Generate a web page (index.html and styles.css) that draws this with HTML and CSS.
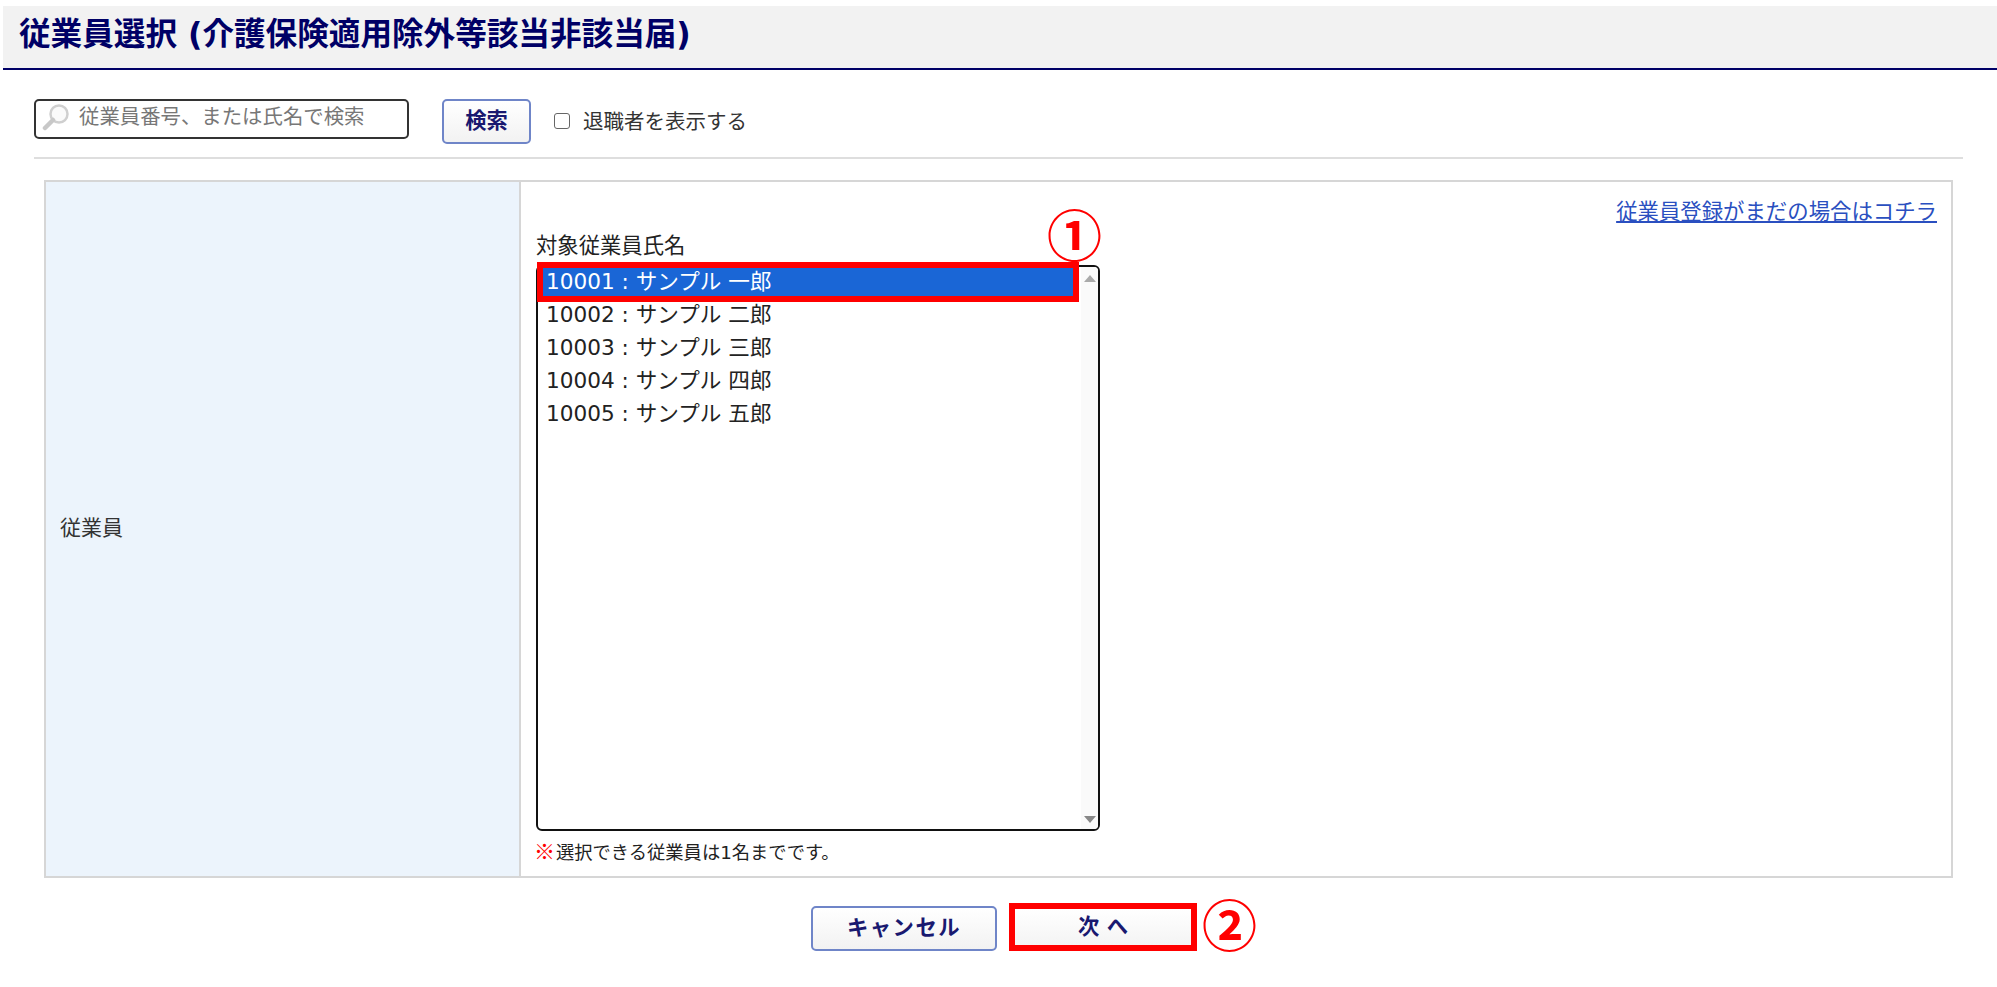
FILE: index.html
```html
<!DOCTYPE html>
<html lang="ja">
<head>
<meta charset="utf-8">
<title>従業員選択</title>
<link rel="stylesheet" href="styles.css">
</head>
<body>
<header class="page-head"><h1 class="page-title">従業員選択 (介護保険適用除外等該当非該当届)</h1></header>
<div class="toolbar">
  <div class="search">
    <svg class="search-icon" viewBox="0 0 28 28" width="28" height="28" aria-hidden="true">
      <circle cx="17" cy="11" r="8.5" fill="#fafafa" stroke="#cfcfcf" stroke-width="2.5"/>
      <path d="M11 17 3 25" stroke="#c8c8c8" stroke-width="4.5" stroke-linecap="round"/>
    </svg>
    <span class="placeholder">従業員番号、または氏名で検索</span>
  </div>
  <button class="btn btn-search" type="button">検索</button>
  <label class="retired"><span class="check"></span>退職者を表示する</label>
</div>
<main class="form">
  <div class="form-label">従業員</div>
  <div class="form-body">
    <div class="link-row"><a class="reg-link" href="#">従業員登録がまだの場合はコチラ</a></div>
    <div class="field-label">対象従業員氏名</div>
    <div class="listwrap">
      <div class="listbox">
        <ul class="options">
          <li class="option selected">10001 : サンプル 一郎</li>
          <li class="option">10002 : サンプル 二郎</li>
          <li class="option">10003 : サンプル 三郎</li>
          <li class="option">10004 : サンプル 四郎</li>
          <li class="option">10005 : サンプル 五郎</li>
        </ul>
        <div class="scrollbar"><span class="arrow up"></span><span class="arrow down"></span></div>
      </div>
      <div class="mark-row"></div>
      <span class="num num-1">①</span>
    </div>
    <p class="note"><span class="note-mark">※</span>選択できる従業員は1名までです。</p>
  </div>
</main>
<div class="actions">
  <button class="btn btn-cancel" type="button">キャンセル</button>
  <div class="next-wrap">
    <button class="btn btn-next" type="button">次 へ</button>
    <span class="num num-2">②</span>
  </div>
</div>
</body>
</html>
```

FILE: styles.css
```css
* { box-sizing: border-box; }
html, body { margin: 0; padding: 0; background: #fff; }
body {
  font-family: "DejaVu Sans", "Noto Sans CJK JP", sans-serif;
  font-size: 21.33px;
  color: #222;
  height: 987px;
  overflow: hidden;
}
.page-head {
  margin: 6px 0 0 3px;
  height: 64px;
  background: #f2f2f2;
  border-bottom: 2px solid #000066;
  display: flex;
  align-items: center;
  padding: 0 0 5px 16px;
}
.page-title {
  margin: 0;
  font-size: 31.6px;
  font-weight: 700;
  color: #000066;
  line-height: 1.2;
}
.toolbar {
  margin: 29px 34px 0;
  height: 60px;
  border-bottom: 2px solid #dedede;
  display: flex;
  align-items: flex-start;
}
.search {
  width: 375px;
  height: 40px;
  border: 2px solid #333;
  border-radius: 5px;
  display: flex;
  align-items: center;
  padding: 0 0 4px 6px;
  background: #fff;
}
.search-icon { flex: none; margin-right: 9px; }
.placeholder { font-size: 20.4px; color: #777; line-height: 1; }
.btn {
  font-family: inherit;
  font-weight: 700;
  font-size: 21.33px;
  color: #191970;
  background: linear-gradient(#fff, #f2f2f2);
  border: 2px solid #6f85c8;
  border-radius: 5px;
  padding: 0 0 1px;
  line-height: 1;
}
.btn-search { width: 89px; height: 45px; margin-left: 33px; }
.retired {
  display: flex;
  align-items: center;
  margin: 8px 0 0 23px;
  height: 26px;
  font-size: 20.5px;
  color: #333;
}
.check {
  width: 16px;
  height: 16px;
  margin: 1px 13px 0 0;
  border: 1.5px solid #666;
  border-radius: 3px;
  background: #fff;
}
.form {
  margin: 21px 44px 0;
  width: 1909px;
  height: 698px;
  border: 2px solid #d6d6d6;
  display: grid;
  grid-template-columns: 475px 1fr;
}
.form-label {
  background: #ecf4fc;
  border-right: 2px solid #d6d6d6;
  display: flex;
  align-items: center;
  padding: 0 0 6px 14px;
  font-size: 21px;
  color: #333;
}
.form-body { padding: 15px 14px 0 15px; }
.link-row { display: flex; justify-content: flex-end; height: 30px; line-height: 30px; }
.reg-link { color: #2a4fc0; font-size: 21.4px; text-decoration: underline; }
.field-label { height: 38px; line-height: 38px; color: #222; }
.listwrap { position: relative; width: 564px; }
.listbox {
  width: 564px;
  height: 566px;
  border: 2px solid #111;
  border-radius: 6px;
  display: flex;
  background: #fff;
  overflow: hidden;
}
.options { list-style: none; margin: 0; padding: 1px 6px 0 5px; flex: 1; font-size: 21.6px; }
.option {
  height: 33px;
  line-height: 28px;
  padding-left: 3px;
  color: #222;
  white-space: nowrap;
}
.option.selected { background: #1a66d6; color: #fff; height: 28px; margin-bottom: 5px; line-height: 28px; }
.scrollbar {
  width: 17px;
  background: #fafafa;
  display: flex;
  flex-direction: column;
  justify-content: space-between;
  align-items: center;
  padding: 8px 0 6px;
}
.arrow { width: 0; height: 0; border-left: 6px solid transparent; border-right: 6px solid transparent; }
.arrow.up { border-bottom: 7px solid #aaa; }
.arrow.down { border-top: 7px solid #888; }
.mark-row {
  position: absolute;
  left: 1px;
  top: -3px;
  width: 542px;
  height: 40px;
  border: 6px solid #f00;
}
.num {
  position: absolute;
  color: #f00;
  font-family: "Noto Sans CJK JP", sans-serif;
  font-weight: 700;
  font-size: 55px;
  line-height: 55px;
}
.num-1 { left: 511px; top: -60px; }
.note { margin: 6px 0 0 -2px; font-size: 18.3px; line-height: 26px; color: #222; }
.note-mark { color: #f00; font-weight: 700; font-size: 21px; margin-right: 1px; font-family: "Noto Sans CJK JP", sans-serif; }
.actions {
  display: flex;
  justify-content: center;
  align-items: flex-end;
  gap: 12px;
  height: 73px;
  padding-left: 11px;
}
.btn-cancel { width: 186px; height: 45px; letter-spacing: 1.5px; }
.next-wrap { position: relative; }
.btn-next { display: block; width: 188px; height: 48px; border: 6px solid #f00; border-radius: 0; background: linear-gradient(#fff, #f4f4f4); }
.num-2 { left: 193px; top: -8px; }
```
